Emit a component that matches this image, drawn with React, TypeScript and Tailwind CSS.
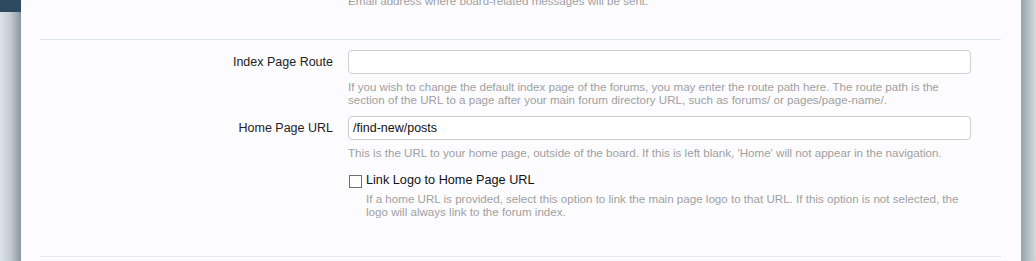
import React from "react";

const font = { fontFamily: '"Liberation Sans", Arial, sans-serif' };

export default function App() {
  return (
    <div className="w-[1036px] h-[261px] flex overflow-hidden" style={font}>
      <div className="w-[21px] flex flex-col shrink-0">
        <div className="h-[12px] bg-[#2e4a61]" />
        <div className="flex-1 bg-gradient-to-r from-[#dde2e6] via-[#c3cbd1] to-[#8896a1]" />
      </div>
      <div className="flex-1 bg-[#fcfcfe] pl-[19px] pr-[20px] flex flex-col">
        <div className="mt-[-6px] h-[46px] border-b border-[#dbe9ee]">
          <div className="ml-[308px] text-[11.6px] leading-[13px] text-[#a0a0a0] whitespace-nowrap">
            Email address where board-related messages will be sent.
          </div>
        </div>
        <div className="pt-[10px] flex flex-col">
          <div className="flex gap-[15px]">
            <div className="w-[293px] h-[24px] flex items-center justify-end text-[12.5px] text-[#222]">
              Index Page Route
            </div>
            <div className="w-[623px]">
              <div className="h-[24px] border border-[#cfcfcf] rounded-[4px] bg-white" />
              <div className="mt-[6px] text-[11.6px] leading-[13px] text-[#a0a0a0] whitespace-nowrap">
                If you wish to change the default index page of the forums, you may enter the route path here. The route path is the
                <br />
                section of the URL to a page after your main forum directory URL, such as forums/ or pages/page-name/.
              </div>
            </div>
          </div>
          <div className="flex gap-[15px] mt-[10px]">
            <div className="w-[293px] h-[24px] flex items-center justify-end text-[12.5px] text-[#222]">
              Home Page URL
            </div>
            <div className="w-[623px]">
              <div className="h-[24px] border border-[#cfcfcf] rounded-[4px] bg-white flex items-center px-[4px] text-[12.5px] text-[#111]">
                /find-new/posts
              </div>
              <div className="mt-[6px] text-[11.6px] leading-[13px] text-[#a0a0a0] whitespace-nowrap">
                This is the URL to your home page, outside of the board. If this is left blank, 'Home' will not appear in the navigation.
              </div>
            </div>
          </div>
          <div className="flex gap-[15px] mt-[14px]">
            <div className="w-[293px]" />
            <div className="w-[623px]">
              <div className="flex items-center h-[16px]">
                <div className="w-[13px] h-[13px] border border-[#6f6f6f] bg-white ml-[1px] shrink-0" />
                <span className="ml-[4px] text-[12.7px] text-[#111]">Link Logo to Home Page URL</span>
              </div>
              <div className="ml-[18px] mt-[3px] text-[11.6px] leading-[13px] text-[#a0a0a0] whitespace-nowrap">
                If a home URL is provided, select this option to link the main page logo to that URL. If this option is not selected, the
                <br />
                logo will always link to the forum index.
              </div>
            </div>
          </div>
        </div>
        <div className="mt-auto mb-[4px] border-b border-[#e6e8ec]" />
      </div>
      <div className="w-[15px] shrink-0 bg-gradient-to-r from-[#96a2ab] via-[#b6bfc5] to-[#d4d9dc]" />
    </div>
  );
}
